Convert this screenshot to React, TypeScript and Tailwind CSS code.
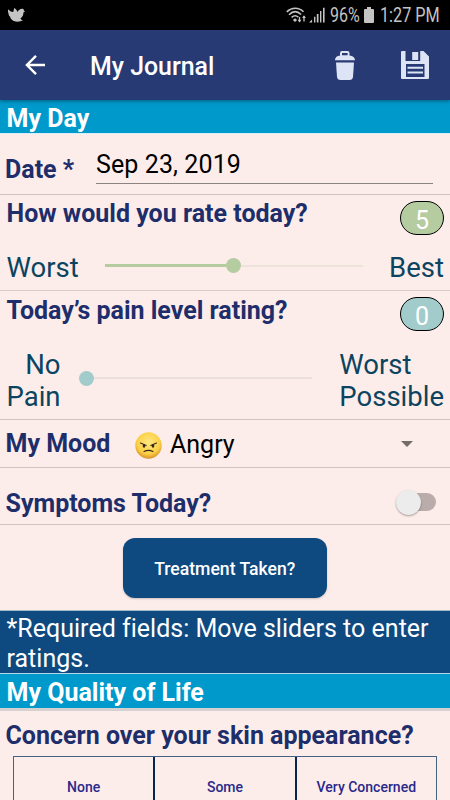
import React from "react";

function StatusBar() {
  return (
    <div className="flex h-[30px] items-center bg-black text-[#c4c4c4]">
      <svg className="ml-2 h-[14px] w-[17px]" viewBox="0 0 17 14" fill="currentColor">
        <path d="M0 1.2C1.5 2.8 3.2 3.8 5.2 4C5.6 2.7 6 1.5 6.2.1C7.8 1 9 2.3 9.5 3.9C10.4 2.3 12 .9 14.2.8C15.4.8 16.1 1.7 15.8 2.6L17 3.6L15.4 4.5C15.4 7.2 14.4 9.2 12.4 10.4C13 11.5 13.8 12.2 14.8 12.6C10.5 14.4 5.3 14 2.8 10.4C2.4 9.8 2.2 9.3 2.1 8.7C1 7.8.5 6.8.6 5.7C0 4.3-.2 2.8 0 1.2Z" />
      </svg>
      <div className="ml-auto flex items-center pr-[10px]">
        <svg className="mr-[2px] h-[16px] w-[21px]" viewBox="0 0 21 16" fill="none" stroke="currentColor">
          <path d="M.8 4.8C5.8.1 12.7.1 17.5 4.8M3 7.7C6.8 4 11.4 4 15.1 7.5M5.6 10.4C7.8 8.3 10.1 8.2 12.4 10.1" strokeWidth="1.6" />
          <path d="M9 11.3L11.1 13.1L9 14.9L6.9 13.1Z" fill="currentColor" stroke="none" />
          <path d="M13.5 10V15M18 9V14.5" strokeWidth="1.3" />
          <path d="M11.6 12.7H15.4L13.5 15.4ZM16.1 11H19.9L18 8.3Z" fill="currentColor" stroke="none" />
        </svg>
        <svg className="mr-[5px] h-[16px] w-[16px]" viewBox="0 0 16 16" fill="currentColor">
          <path d="M0 15.5L3.1 12.5V15.5ZM5 9.8H6.4V15.5H5ZM7.8 6.9H9.5V15.5H7.8ZM11 4.1H12.4V15.5H11ZM14 .8H15.6V15.5H14Z" />
        </svg>
        <span className="w-[30px] whitespace-nowrap text-[20px] leading-[32px]">
          <span className="inline-block origin-left scale-x-[0.8]">96%</span>
        </span>
        <svg className="ml-[4px] mr-[6px] h-[16px] w-[10px]" viewBox="0 0 10 16" fill="currentColor">
          <path d="M3 0H7V2H9Q10 2 10 3V15Q10 16 9 16H1Q0 16 0 15V3Q0 2 1 2H3Z" />
        </svg>
        <span className="w-[60px] whitespace-nowrap text-[20px] leading-[32px]">
          <span className="inline-block origin-left scale-x-[0.81]">1:27 PM</span>
        </span>
      </div>
    </div>
  );
}

function Header() {
  return (
    <header className="z-10 flex h-[70px] items-center bg-[#273a73] text-white shadow-[0_1px_4px_rgba(0,0,0,0.4)]">
      <svg className="ml-[25px] h-5 w-5" viewBox="0 0 20 20" fill="none" stroke="currentColor" strokeWidth="2.4">
        <path d="M20 10H2M11 .9L1.9 10L11 19.1" />
      </svg>
      <h1 className="ml-[45px] mt-[3px] whitespace-nowrap text-[24.9px] font-medium leading-[30px]">My Journal</h1>
      <svg className="ml-auto mt-[1px] h-[29px] w-[20px]" viewBox="0 0 20 29" fill="#dce4f5">
        <path fillRule="evenodd" d="M5 5V2Q5 0 7 0H12.5Q14.5 0 14.5 2V4.5C18 5 20 6.5 20 9.2H0C0 6.5 1.7 5 5 4.5ZM7 2V4.3H12.6V2Z" />
        <path d="M1 11.5H19L18 26Q17.6 29 14.5 29H5.5Q2.4 29 2 26Z" />
      </svg>
      <svg className="ml-[46px] mr-[21px] h-[28px] w-[28px]" viewBox="0 0 28 28" fill="#dce4f5">
        <path fillRule="evenodd" d="M1 0H4.5V10H19.2V0H22.5L28 5.5V27Q28 28 27 28H1Q0 28 0 27V1Q0 0 1 0ZM5 13V26H23.5V13Z" />
        <path d="M11.2 1H17.2V9H11.2ZM6.5 15.8H22V17.7H6.5ZM6.5 20.5H22V22.4H6.5Z" />
      </svg>
    </header>
  );
}

function Rating({ value, color }: { value: number; color: string }) {
  return (
    <span className={`flex h-[34px] w-[44px] items-center justify-center rounded-full border border-black pt-[4px] text-[25px] leading-none text-white ${color}`}>
      {value}
    </span>
  );
}

const label = "whitespace-nowrap text-[25px] font-bold leading-[30px] text-[#1d2e6b]";
const scaleText = "whitespace-nowrap text-[27.5px] leading-8 text-[#0b4460]";

function QualityChoices() {
  return (
    <div className="mx-[13px] mt-[5px] flex h-[60px] border border-[#426383] pt-0 text-[14px] font-medium text-[#28298a]">
      {["None", "Some", "Very Concerned"].map((choice, i) => (
        <button key={choice} className={i === 0 ? "flex-1 whitespace-nowrap pt-[3px]" : "flex-1 whitespace-nowrap border-l-2 border-[#082452] pt-[3px]"}>
          {choice}
        </button>
      ))}
    </div>
  );
}

export default function App() {
  return (
    <main className="flex h-[800px] w-[450px] flex-col overflow-hidden bg-[#fdedea] font-[Roboto,sans-serif] *:shrink-0">
      <StatusBar />
      <Header />
      <h2 className="h-[34px] border-b border-[#d9eef4] bg-[#0099cc] pl-[6.5px] text-[25px] font-bold leading-[37px] text-white">My Day</h2>

      <section className="flex h-[61px] border-b border-[#cdc3c1] pl-[5px] pr-[17px]">
        <span className={`${label} mt-[21px] w-[91px]`}>Date *</span>
        <span className="mt-[12px] h-[38px] flex-1 border-b border-[#8c8482] text-[25px] leading-[37px] tracking-[0.1px] text-black">Sep 23, 2019</span>
      </section>

      <section className="flex h-[96px] flex-col border-b border-[#d6cdca] pl-[6.5px] pr-[6px]">
        <div className="flex h-[54px] items-start justify-between pt-[3px]">
          <span className={`${label} pt-px`}>How would you rate today?</span>
          <span className="mt-[3px]"><Rating value={5} color="bg-[#b5cba0]" /></span>
        </div>
        <div className="flex h-[36px] items-center">
          <span className={`${scaleText} w-[98.5px] pt-[2px]`}>Worst</span>
          <div className="-mt-[3px] flex flex-1 items-center">
            <div className="h-[3px] w-[121px] bg-[#b5cba0]" />
            <div className="h-[15px] w-[15px] rounded-full bg-[#b5cba0]" />
            <div className="h-[2px] w-[122px] bg-[#eee3db]" />
          </div>
          <span className={`${scaleText} pt-[2px]`}>Best</span>
        </div>
      </section>

      <section className="flex h-[129px] flex-col border-b border-[#cdc3c1] pl-[6.5px] pr-[6px]">
        <div className="flex h-[56px] items-start justify-between pt-[4px]">
          <span className={`${label} pt-px`}>Today’s pain level rating?</span>
          <span className="mt-[2px]"><Rating value={0} color="bg-[#a1cccb]" /></span>
        </div>
        <div className="flex h-[66px] items-center">
          <div className={`${scaleText} w-[54px] pt-px text-right`}>No<br />Pain</div>
          <div className="-mt-[4px] ml-[18.5px] flex flex-1 items-center">
            <div className="h-[15px] w-[15px] rounded-full bg-[#a1cccb]" />
            <div className="h-[2px] w-[218px] bg-[#ece0de]" />
          </div>
          <div className={`${scaleText} pt-px`}>Worst<br />Possible</div>
        </div>
      </section>

      <section className="flex h-[48px] items-center border-b border-[#cdc3c1] pl-[5.5px]">
        <span className={`${label} w-[129.5px] pt-px`}>My Mood</span>
        <svg className="mt-[3px] h-[27px] w-[27px]" viewBox="0 0 27 27">
          <defs>
            <radialGradient id="mood-face" cx="50%" cy="38%" r="62%">
              <stop offset="0" stopColor="#ffe77f" />
              <stop offset=".7" stopColor="#fbd045" />
              <stop offset="1" stopColor="#d9922a" />
            </radialGradient>
          </defs>
          <circle cx="13.5" cy="13.5" r="13.2" fill="url(#mood-face)" />
          <path d="M5.5 11L11.2 13.4M21.5 11L15.8 13.4M9 19.6Q13.5 17.2 18 19.6" fill="none" stroke="#35271b" strokeWidth="1.1" strokeLinecap="round" />
          <ellipse cx="9" cy="14" rx="1.3" ry="1.7" fill="#35271b" />
          <ellipse cx="18" cy="14" rx="1.3" ry="1.7" fill="#35271b" />
        </svg>
        <span className="ml-[8px] mt-[3px] whitespace-nowrap text-[25px] leading-[30px] text-black">Angry</span>
        <svg className="ml-auto mr-[37px] mt-px h-[6px] w-3" viewBox="0 0 12 6" fill="#746c6a">
          <path d="M0 0H12L6 6Z" />
        </svg>
      </section>

      <section className="flex h-[57px] items-center border-b border-[#cdc3c1] pl-[5.5px] pr-[14px]">
        <span className={`${label} mt-[16px]`}>Symptoms Today?</span>
        <button className="ml-auto mt-[12px] flex h-[18px] w-[34px] items-center rounded-full bg-[#b9acaa]" aria-label="Symptoms today">
          <span className="-ml-[6px] h-[25px] w-[25px] shrink-0 rounded-full bg-[#ececec] shadow-[0_1px_2px_rgba(0,0,0,0.35)]" />
        </button>
      </section>

      <div className="flex h-[85px] items-start pl-[122.5px] pt-[13px]">
        <button className="h-[60px] w-[204.5px] rounded-[12px] bg-[#0e4a80] pt-[2px] text-[17.6px] font-medium text-white shadow-[0_1px_2px_rgba(0,0,0,0.2)]">
          Treatment Taken?
        </button>
      </div>

      <p className="h-[64px] whitespace-nowrap border-y border-t-[#a3bac8] border-b-[#b0d8e7] bg-[#0e4a80] pl-[6.5px] pt-[3px] text-[25px] leading-[29.5px] tracking-[0.02px] text-white">
        *Required fields: Move sliders to enter<br />ratings.
      </p>
      <h2 className="h-[34px] bg-[#0099cc] pl-[6.5px] text-[25px] font-bold leading-[38px] text-white">My Quality of Life</h2>
      <div className="h-[3px] bg-[#d5d1d0]" />
      <h3 className={`${label} mt-[10px] pl-[5.5px]`}>Concern over your skin appearance?</h3>
      <QualityChoices />
    </main>
  );
}
